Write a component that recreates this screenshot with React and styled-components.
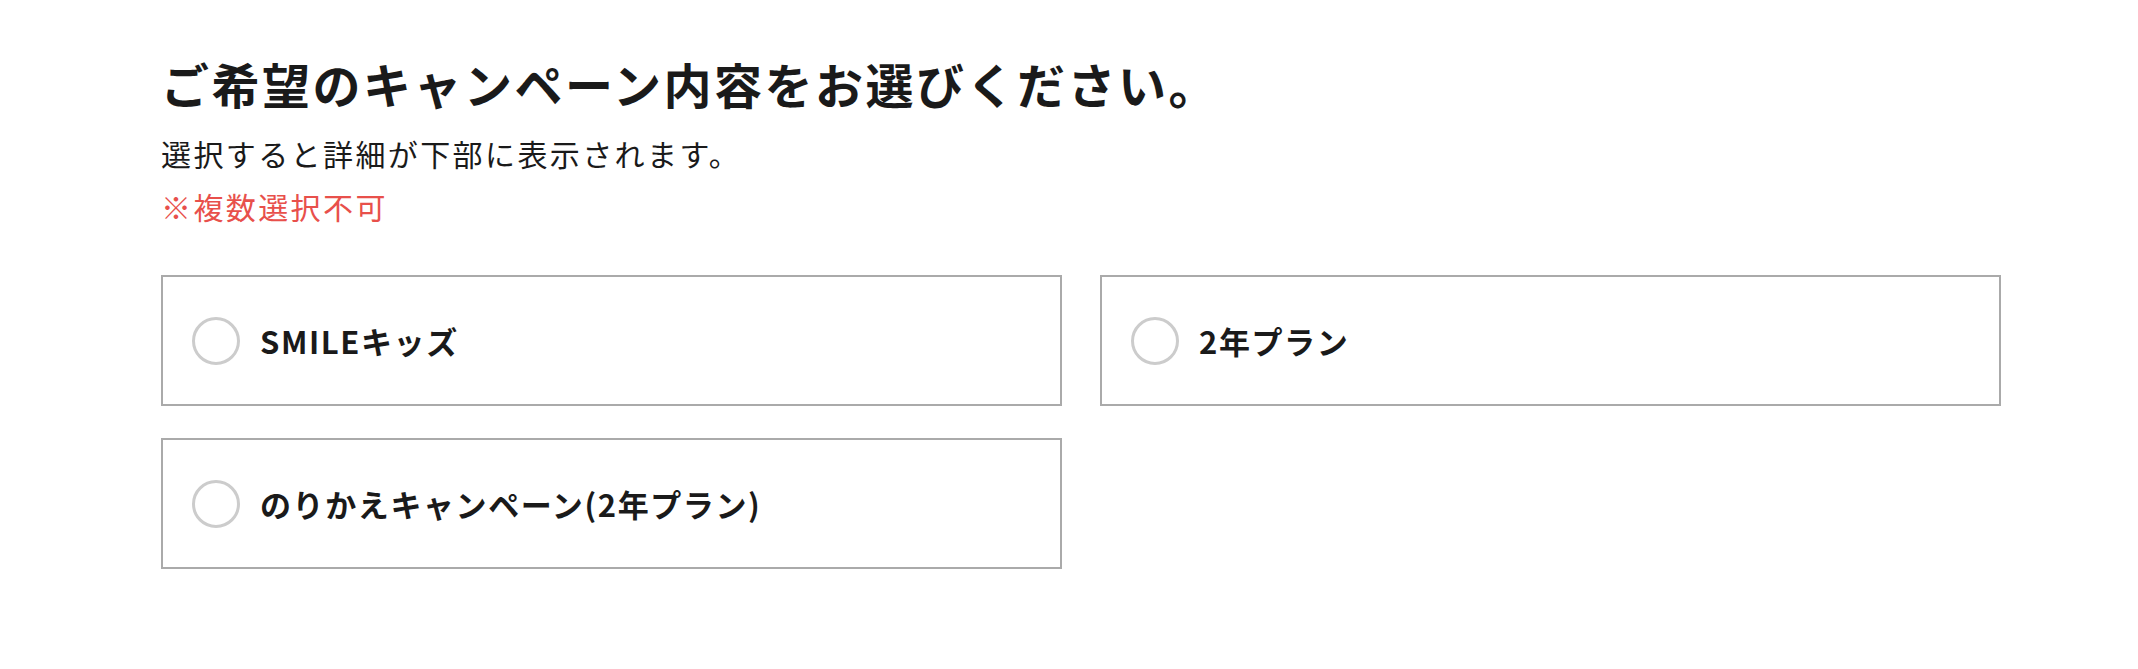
import React, { useState } from "react";
import styled, { createGlobalStyle } from "styled-components";

const GlobalStyle = createGlobalStyle`
  * { box-sizing: border-box; }
  html, body { margin: 0; padding: 0; background: #ffffff; }
  body {
    font-family: "Noto Sans CJK JP", "Noto Sans", sans-serif;
    color: #1a1a1a;
  }
`;

const Section = styled.section`
  padding: 59px 138px 60px 161px;
`;

const Title = styled.h2`
  margin: 0;
  font-size: 48px;
  line-height: 1;
  font-weight: 700;
  letter-spacing: 2.5px;
  color: #1a1a1a;
`;

const Lead = styled.p`
  margin: 31px 0 0;
  font-size: 30px;
  line-height: 1;
  font-weight: 400;
  letter-spacing: 2.4px;
  color: ${(p) => (p.$warn ? "#e8504b" : "#1a1a1a")};
  & + & {
    margin-top: 23px;
  }
`;

const OptionGrid = styled.div`
  margin-top: 54px;
  display: grid;
  grid-template-columns: 901px 901px;
  column-gap: 38px;
  row-gap: 32px;
`;

const Option = styled.label`
  height: 131px;
  border: 2px solid #aaaaaa;
  background: #fff;
  display: flex;
  align-items: center;
  padding-left: 29px;
  gap: 20px;
  cursor: pointer;
`;

const HiddenInput = styled.input`
  position: absolute;
  opacity: 0;
  width: 0;
  height: 0;
`;

const Radio = styled.span`
  flex: none;
  width: 48px;
  height: 48px;
  border-radius: 50%;
  border: 3px solid #cccccc;
  display: flex;
  align-items: center;
  justify-content: center;
  &::after {
    content: "";
    width: 24px;
    height: 24px;
    border-radius: 50%;
    background: ${(p) => (p.$checked ? "#e8504b" : "transparent")};
  }
`;

const OptionText = styled.span`
  font-size: 31px;
  line-height: 1;
  font-weight: 700;
  letter-spacing: 1.6px;
  color: #1a1a1a;
`;

const options = [
  { id: "kids", label: "SMILEキッズ" },
  { id: "2year", label: "2年プラン" },
  { id: "norikae", label: "のりかえキャンペーン(2年プラン)" },
];

export default function App() {
  const [selected, setSelected] = useState(null);
  return (
    <>
      <GlobalStyle />
      <Section>
        <Title>ご希望のキャンペーン内容をお選びください。</Title>
        <Lead>選択すると詳細が下部に表示されます。</Lead>
        <Lead $warn>※複数選択不可</Lead>
        <OptionGrid>
          {options.map((o) => (
            <Option key={o.id}>
              <HiddenInput
                type="radio"
                name="campaign"
                checked={selected === o.id}
                onChange={() => setSelected(o.id)}
              />
              <Radio $checked={selected === o.id} />
              <OptionText>{o.label}</OptionText>
            </Option>
          ))}
        </OptionGrid>
      </Section>
    </>
  );
}
